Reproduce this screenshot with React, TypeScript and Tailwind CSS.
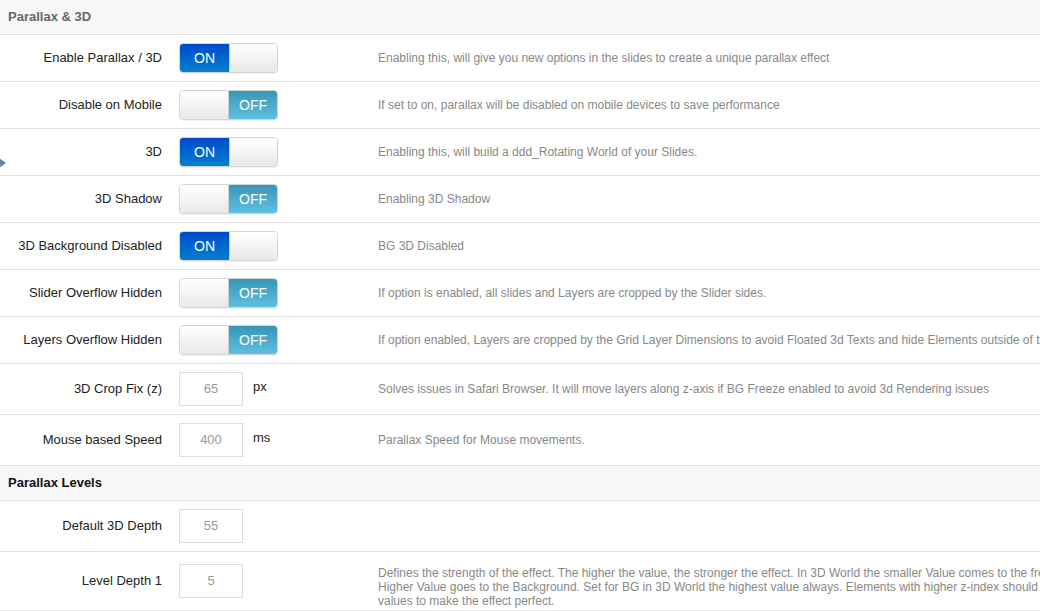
import React from "react";

type Row =
  | { kind: "toggle"; label: string; on: boolean; desc: string }
  | { kind: "input"; label: string; value: string; unit?: string; desc: string };

const rows1: Row[] = [
  { kind: "toggle", label: "Enable Parallax / 3D", on: true, desc: "Enabling this, will give you new options in the slides to create a unique parallax effect" },
  { kind: "toggle", label: "Disable on Mobile", on: false, desc: "If set to on, parallax will be disabled on mobile devices to save performance" },
  { kind: "toggle", label: "3D", on: true, desc: "Enabling this, will build a ddd_Rotating World of your Slides." },
  { kind: "toggle", label: "3D Shadow", on: false, desc: "Enabling 3D Shadow" },
  { kind: "toggle", label: "3D Background Disabled", on: true, desc: "BG 3D Disabled" },
  { kind: "toggle", label: "Slider Overflow Hidden", on: false, desc: "If option is enabled, all slides and Layers are cropped by the Slider sides." },
  { kind: "toggle", label: "Layers Overflow Hidden", on: false, desc: "If option enabled, Layers are cropped by the Grid Layer Dimensions to avoid Floated 3d Texts and hide Elements outside of the Grid" },
  { kind: "input", label: "3D Crop Fix (z)", value: "65", unit: "px", desc: "Solves issues in Safari Browser. It will move layers along z-axis if BG Freeze enabled to avoid 3d Rendering issues" },
  { kind: "input", label: "Mouse based Speed", value: "400", unit: "ms", desc: "Parallax Speed for Mouse movements." },
];

function Toggle({ on }: { on: boolean }) {
  return (
    <div className="flex h-[30px] w-[99px] overflow-hidden rounded-[4px] border border-[#d4d4d4] shadow-[0_1px_1px_rgba(0,0,0,0.06)]">
      {on ? (
        <>
          <div className="flex w-[49px] items-center justify-center bg-gradient-to-b from-[#0047cc] to-[#0a7fcc] text-[14px] text-white">ON</div>
          <div className="flex-1 border-l border-[#d0d0d0] bg-gradient-to-b from-[#ffffff] to-[#e8e8e8]" />
        </>
      ) : (
        <>
          <div className="w-[49px] border-r border-[#d0d0d0] bg-gradient-to-b from-[#ffffff] to-[#e8e8e8]" />
          <div className="flex flex-1 items-center justify-center bg-gradient-to-b from-[#3696b8] to-[#5ec1df] text-[14px] text-white">OFF</div>
        </>
      )}
    </div>
  );
}

function NumInput({ value }: { value: string }) {
  return (
    <div className="flex h-[34px] w-[64px] items-center justify-center border border-[#dddddd] bg-white text-[13px] text-[#999]">
      {value}
    </div>
  );
}

function SettingRow({ row }: { row: Row }) {
  const tall = row.kind === "input";
  return (
    <div className={`flex items-center border-b border-[#e2e2e2] ${tall ? "h-[51px]" : "h-[47px]"}`}>
      <div className="w-[162px] text-right text-[13px] text-[#222]">{row.label}</div>
      <div className="ml-[17px] flex w-[199px] items-center">
        {row.kind === "toggle" ? (
          <Toggle on={row.on} />
        ) : (
          <>
            <NumInput value={row.value} />
            <span className="mb-[5px] ml-[10px] text-[13px] text-[#222]">{row.unit}</span>
          </>
        )}
      </div>
      <div className="whitespace-nowrap text-[12px] text-[#888]">{row.desc}</div>
    </div>
  );
}

export default function App() {
  return (
    <div
      className="relative h-[611px] w-[1040px] overflow-hidden bg-white"
      style={{ fontFamily: '"Liberation Sans", Arial, sans-serif' }}
    >
      <div className="w-[1200px]">
        <div className="flex h-[35px] items-center border-b border-[#e2e2e2] bg-[#f7f7f7] pl-[8px] text-[13px] font-bold text-[#666]">
          Parallax &amp; 3D
        </div>
        {rows1.map((r) => (
          <SettingRow key={r.label} row={r} />
        ))}
        <div className="flex h-[35px] items-center border-b border-[#e2e2e2] bg-[#f7f7f7] pl-[8px] text-[13px] font-bold text-[#111]">
          Parallax Levels
        </div>
        <div className="flex h-[51px] items-center border-b border-[#e2e2e2]">
          <div className="w-[162px] text-right text-[13px] text-[#222]">Default 3D Depth</div>
          <div className="ml-[17px] flex w-[199px] items-center">
            <NumInput value="55" />
          </div>
        </div>
        <div className="flex h-[59px] border-b border-[#e2e2e2]">
          <div className="flex w-[162px] items-center justify-end text-[13px] text-[#222]">Level Depth 1</div>
          <div className="ml-[17px] flex w-[199px] items-center">
            <NumInput value="5" />
          </div>
          <div className="whitespace-nowrap pt-[14px] text-[12px] leading-[14px] text-[#888]">
            Defines the strength of the effect. The higher the value, the stronger the effect. In 3D World the smaller Value comes to the front,
            <br />
            Higher Value goes to the Background. Set for BG in 3D World the highest value always. Elements with higher z-index should get higher
            <br />
            values to make the effect perfect.
          </div>
        </div>
      </div>
      <div className="absolute left-[-1px] top-[158px] h-0 w-0 border-y-[5px] border-l-[7px] border-y-transparent border-l-[#6b8197]" />
    </div>
  );
}
